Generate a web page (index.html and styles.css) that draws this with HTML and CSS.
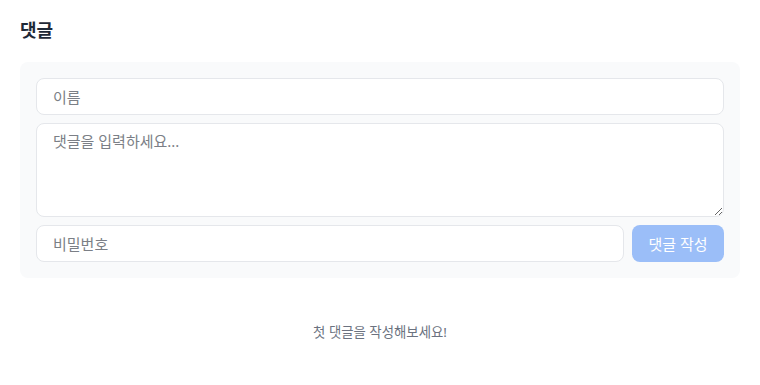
FILE: index.html
```html
<!DOCTYPE html>
<html lang="ko">
<head>
<meta charset="utf-8">
<link rel="stylesheet" href="styles.css">
</head>
<body>
<section class="comments">
  <h3 class="title">댓글</h3>
  <form class="card">
    <input class="field" type="text" placeholder="이름">
    <textarea class="field area" placeholder="댓글을 입력하세요..."></textarea>
    <div class="row">
      <input class="field grow" type="password" placeholder="비밀번호">
      <button class="submit" type="button" disabled>댓글 작성</button>
    </div>
  </form>
  <p class="empty">첫 댓글을 작성해보세요!</p>
</section>
</body>
</html>
```
FILE: styles.css
```css
* { box-sizing: border-box; }
html, body { margin: 0; background: #fff; }
body {
  font-family: "Noto Sans", "Noto Sans CJK KR", sans-serif;
  color: #111827;
}
.comments { padding: 16px 20px; }
.title {
  margin: 0 0 18px;
  font-size: 18px;
  line-height: 28px;
  font-weight: 700;
  color: #1f2937;
}
.card {
  background: #f9fafb;
  border-radius: 8px;
  padding: 16px;
  display: flex;
  flex-direction: column;
  gap: 8px;
}
.field {
  display: block;
  width: 100%;
  height: 37px;
  padding: 0 16px;
  border: 1px solid #e5e7eb;
  border-radius: 8px;
  background: #fff;
  font-family: inherit;
  font-size: 15px;
  color: #111827;
  outline: none;
}
.field::placeholder { color: #7b7f86; }
.area {
  height: 94px;
  padding: 6px 16px;
  line-height: 22px;
  resize: vertical;
}
.row { display: flex; gap: 8px; }
.grow { flex: 1; width: auto; }
.submit {
  width: 92px;
  height: 37px;
  border: 0;
  border-radius: 8px;
  background: #9bbef8;
  color: #fff;
  font-family: inherit;
  font-size: 15px;
  padding: 0;
}
.empty {
  margin: 44px 0 0;
  text-align: center;
  font-size: 13.4px;
  line-height: 20px;
  color: #6b7280;
}
```
